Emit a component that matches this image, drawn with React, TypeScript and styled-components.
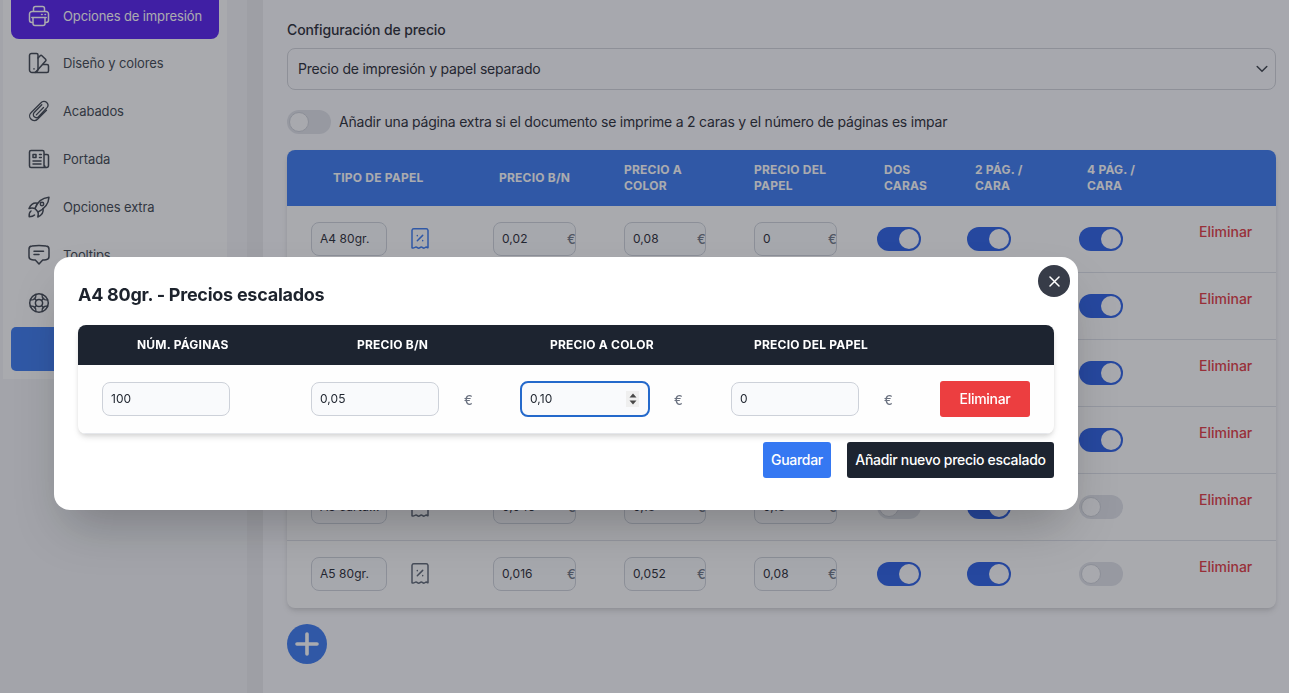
import React from "react";
import styled, { createGlobalStyle } from "styled-components";

const Global = createGlobalStyle`
  *, *::before, *::after { box-sizing: border-box; }
  html, body { margin: 0; height: 100%; overflow: hidden; }
  body {
    font-family: Inter, "Liberation Sans", sans-serif;
    font-size: 14px;
    color: #1d232d;
    background: #f3f4f7;
  }
  button, input { font: inherit; color: inherit; letter-spacing: inherit; }
`;

const Page = styled.div`
  display: flex;
  height: 693px;
  overflow: hidden;
`;
const Rail = styled.div`
  flex: 0 0 247px;
  padding-left: 3px;
`;
const Sidebar = styled.nav`
  width: 224px;
  height: 379px;
  padding: 0 8px;
  background: #fdfdfd;
`;
const NavItem = styled.a<{ $active?: boolean }>`
  display: flex;
  align-items: center;
  gap: 12px;
  height: 48px;
  padding-left: 16px;
  font-size: 13px;
  letter-spacing: -0.12px;
  color: ${(p) => (p.$active ? "#fff" : "#373e49")};
  svg { flex: none; }
`;
const ActiveItem = styled(NavItem)`
  height: 39px;
  padding-bottom: 8px;
  background: #4f16ed;
  border-radius: 0 0 8px 8px;
`;
const SaveBar = styled.div`
  height: 44px;
  background: #3576f0;
  border-radius: 5px;
`;
const Divider = styled.div`
  flex: 0 0 16px;
  background: #ebebee;
`;
const Main = styled.main`
  flex: 1;
  padding: 20px 13px 0 24px;
  background: #fafafd;
`;
const Label = styled.div`
  height: 20px;
  line-height: 20px;
  font-weight: 500;
  letter-spacing: -0.12px;
`;
const Select = styled.div`
  display: flex;
  align-items: center;
  justify-content: space-between;
  height: 42px;
  margin-top: 8px;
  padding: 0 7px 2px 10px;
  border: 1px solid #d1d3d9;
  border-radius: 8px;
  letter-spacing: -0.21px;
  svg { margin-top: 2px; }
`;
const SwitchLine = styled.div`
  display: flex;
  align-items: center;
  gap: 8px;
  height: 24px;
  margin: 20px 0 16px;
`;
const SwitchText = styled.span`
  padding-bottom: 2px;
  letter-spacing: -0.207px;
`;
const Toggle = styled.span<{ $on?: boolean }>`
  display: flex;
  flex: none;
  justify-content: ${(p) => (p.$on ? "flex-end" : "flex-start")};
  width: 44px;
  height: 24px;
  padding: 2px;
  border-radius: 12px;
  background: ${(p) => (p.$on ? "#245ae4" : "#dfe1e8")};
  &::after {
    content: "";
    width: 20px;
    height: 20px;
    border-radius: 50%;
    background: #fcfcfd;
    border: ${(p) => (p.$on ? "0" : "1px solid #cdd0d8")};
  }
`;
const Table = styled.section`
  border-radius: 8px;
  overflow: hidden;
  background: #fefefe;
  box-shadow: 0 4px 6px -1px rgba(0, 0, 0, 0.12), 0 2px 4px -1px rgba(0, 0, 0, 0.08);
`;
const PriceGrid = styled.div`
  display: grid;
  grid-template-columns: 182px 131px 130px 123px 90px 112px 120px 1fr;
  padding-left: 24px;
`;
const PriceHead = styled(PriceGrid)`
  height: 56px;
  align-items: center;
  background: #3576f0;
  color: #fff;
`;
const Th = styled.div<{ $pad?: number }>`
  padding-left: ${(p) => p.$pad ?? 0}px;
  font-size: 12px;
  line-height: 16px;
  font-weight: 700;
  letter-spacing: 0.22px;
  text-transform: uppercase;
  white-space: pre-line;
`;
const PriceRow = styled(PriceGrid)`
  height: 67px;
  padding-top: 16px;
  align-items: start;
  border-bottom: 1px solid #dcdfe7;
  &:last-child { border-bottom-color: transparent; }
  ${Toggle} { margin-top: 5px; }
`;
const NameCell = styled.div`
  display: flex;
  align-items: center;
  gap: 22px;
`;
const Field = styled.div<{ $w: number }>`
  display: flex;
  align-items: center;
  justify-content: space-between;
  width: ${(p) => p.$w}px;
  height: 34px;
  padding: 0 0 2px 8px;
  border: 1px solid #cdd1d9;
  border-radius: 8px;
  background: #f9fafc;
  font-size: 12px;
  letter-spacing: 0.05px;
  overflow: hidden;
  white-space: nowrap;
`;
const Unit = styled.span`
  width: 8px;
  padding-top: 1px;
  color: #6b7280;
  font-size: 13px;
  line-height: 16px;
  font-weight: 500;
`;
const Remove = styled.a`
  color: #e2323b;
  line-height: 20px;
  font-weight: 500;
`;
const AddButton = styled.button`
  display: flex;
  align-items: center;
  justify-content: center;
  width: 40px;
  height: 40px;
  margin-top: 16px;
  padding: 0;
  border: 0;
  border-radius: 50%;
  background: #3576f0;
`;

const Overlay = styled.div`
  position: fixed;
  inset: 0;
  display: flex;
  align-items: flex-start;
  padding: 257px 0 0 54px;
  background: rgba(42, 46, 54, 0.4);
`;
const Dialog = styled.div`
  position: relative;
  width: 1024px;
  height: 253px;
  padding: 24px;
  border-radius: 16px;
  background: #fff;
  box-shadow: 0 25px 50px -12px rgba(0, 0, 0, 0.25);
`;
const Close = styled.button`
  position: absolute;
  top: 8px;
  right: 8px;
  display: flex;
  align-items: center;
  justify-content: center;
  width: 32px;
  height: 32px;
  padding: 0;
  border: 0;
  border-radius: 50%;
  background: #373c48;
`;
const Title = styled.h3`
  margin: 0 0 16px;
  font-size: 18px;
  line-height: 28px;
  font-weight: 700;
  letter-spacing: -0.26px;
`;
const ScaleGrid = styled.div`
  display: grid;
  grid-template-columns: 209px 210px 210px 209px 1fr;
  padding: 0 24px;
`;
const ScaleHead = styled(ScaleGrid)`
  height: 40px;
  align-items: center;
  color: #fff;
  background: #1d2430;
`;
const ScaleRow = styled(ScaleGrid)`
  height: 69px;
  padding-top: 16px;
  border-bottom: 1px solid #e5e7eb;
`;
const ScaleCell = styled.div`
  display: flex;
  align-items: center;
  gap: 25px;
  height: 36px;
`;
const Focused = styled(Field)`
  height: 36px;
  margin: 0 -1px;
  padding-right: 9px;
  border: 2px solid #2469cb;
`;
const Spinner = styled.span`
  display: flex;
  align-items: center;
  justify-content: center;
  width: 13px;
  height: 16px;
  margin-top: 2px;
  background: #efefef;
`;
const Button = styled.button<{ $bg: string; $w: number }>`
  width: ${(p) => p.$w}px;
  height: 36px;
  padding: 0 0 2px;
  border: 0;
  border-radius: 3px;
  background: ${(p) => p.$bg};
  color: #fff;
  font-weight: 500;
  letter-spacing: -0.3px;
  white-space: nowrap;
`;
const Actions = styled.div`
  display: flex;
  justify-content: flex-end;
  gap: 16px;
  margin-top: 8px;
`;

const Icon = ({ children }: { children: React.ReactNode }) => (
  <svg width="24" height="24" viewBox="0 0 24 24" fill="none" stroke="currentColor" strokeWidth="1.5" strokeLinecap="round" strokeLinejoin="round">
    {children}
  </svg>
);

const PrinterIcon = () => (
  <Icon>
    <path d="M6.500 7V4.500a2 2 0 0 1 2-2h7a2 2 0 0 1 2 2V7" />
    <path d="M5.500 18.500H5a2.500 2.500 0 0 1-2.500-2.500v-6A2.500 2.500 0 0 1 5 7.500h14a2.500 2.500 0 0 1 2.500 2.500v6a2.500 2.500 0 0 1-2.500 2.500h-.5" />
    <path d="M4.800 13.500h14.400M6 13.500v6a2 2 0 0 0 2 2h8a2 2 0 0 0 2-2v-6" />
    <path d="M14.500 10.500h.7M18 10.500h.5" />
  </Icon>
);
const SwatchIcon = () => (
  <Icon>
    <path d="M4.500 2.500h5A1.500 1.500 0 0 1 11 4v14a3.500 3.500 0 0 1-3.500 3.500H5A2.500 2.500 0 0 1 2.500 19V4.500a2 2 0 0 1 2-2z" />
    <path d="M11 7l2.200-2.300a1.200 1.200 0 0 1 1.700 0l3.700 3.600a1.200 1.200 0 0 1 0 1.700L8.800 21" />
    <path d="M16 13.500h4a1.500 1.500 0 0 1 1.500 1.500v5a1.500 1.500 0 0 1-1.500 1.500H8M7 17.800v.1" />
  </Icon>
);
const ClipIcon = () => (
  <Icon>
    <path d="M19.500 11.200l-9 9a4.500 4.500 0 0 1-6.600-.2 4.500 4.500 0 0 1 .1-6.300l10-10a3.900 3.900 0 0 1 5.700-.2c1.500 1.500 1.700 3.500.3 5.100l-8.500 9a3 3 0 0 1-4.200.2 3 3 0 0 1-.1-4.300l7.600-7.800" strokeWidth="1.300" />
    <path d="M16.500 8.500l-7.200 7.400" strokeWidth="1.300" />
  </Icon>
);
const NewsIcon = () => (
  <Icon>
    <path d="M4 3.500h11.500A1.500 1.500 0 0 1 17 5v13a2.500 2.500 0 0 0 2.500 2.500H4A1.500 1.500 0 0 1 2.500 19V5A1.500 1.500 0 0 1 4 3.500zM17 7.500h3A1.500 1.500 0 0 1 21.500 9v9.500a2 2 0 0 1-2 2 2 2 0 0 1-2-2" />
    <path d="M6 7.500h3v3H6zM12.500 7.500h1.800M12.500 10.500h1.800M6 14h8M6 17h8" />
  </Icon>
);
const RocketIcon = () => (
  <Icon>
    <path d="M8 13.500C10 7.500 14 3 22 2.200 21.500 10 17 14 11 17z" />
    <circle cx="15" cy="9" r="1.700" />
    <path d="M10.500 8.200C7 7.500 4 9 2 13.500c2-.7 4-.7 6 0M16 13.500c.7 3.500-.8 6.500-5.200 8.500.7-2 .7-3.500.2-5" />
    <path d="M4 16c-1.500 1-2 3.500-1.800 5.700 2 0 4-.3 5.300-1.700" />
  </Icon>
);
const TooltipIcon = () => (
  <Icon>
    <path d="M5 3c4.500-.7 9.500-.7 14 0a3.200 3.200 0 0 1 3 3.200v7.300a3.200 3.200 0 0 1-3 3.200c-1.100.2-2.200.3-3.300.3L12 21l-3.700-4c-1.100 0-2.200-.1-3.300-.3a3.200 3.200 0 0 1-3-3.200V6.200A3.200 3.200 0 0 1 5 3zM7 8.200h9.500M7 11.500h5" />
  </Icon>
);
const LifebuoyIcon = () => (
  <Icon>
    <circle cx="12" cy="12" r="9.300" />
    <circle cx="12" cy="12" r="3.600" />
    <path d="M9.500 9.500L7.400 7.400M14.500 9.500l2.100-2.100M9.500 14.500l-2.100 2.100M14.500 14.500l2.100 2.100" />
    <path d="M9 3.300L8.600 6.500 6.500 8.600 3.300 9M15 3.300l.4 3.200 2.100 2.100 3.200.4M9 20.700l-.4-3.200-2.100-2.100L3.300 15M15 20.700l.4-3.200 2.100-2.100 3.200-.4" strokeWidth="1.300" />
  </Icon>
);
const CouponIcon = ({ color }: { color: string }) => (
  <svg width="22" height="24" viewBox="0 0 22 24" fill="none" stroke={color} strokeWidth="1.500" strokeLinecap="round" strokeLinejoin="round">
    <path d="M3 20.800V3.300a1.800 1.800 0 0 1 1.800-1.500h12.400A1.800 1.800 0 0 1 19 3.300v17.500c-1-.7-2-.9-2.700-.3s-1.700.9-2.700.1-1.700-.8-2.600 0-1.700.8-2.600 0-1.800-.7-2.700-.1-1.700.8-2.700.3z" />
    <path d="M8.300 13.800l5.400-5.400M8.300 8.600v.1M13.700 13.600v.1" />
  </svg>
);

const nav: [string, () => React.JSX.Element][] = [
  ["Diseño y colores", SwatchIcon],
  ["Acabados", ClipIcon],
  ["Portada", NewsIcon],
  ["Opciones extra", RocketIcon],
  ["Tooltips", TooltipIcon],
  ["", LifebuoyIcon],
];

type Paper = { name: string; bn: string; color: string; paper: string; on: boolean[]; scaled?: boolean };
const emptyPaper: Paper = { name: "", bn: "", color: "", paper: "", on: [true, true, true] };
const papers: Paper[] = [
  { name: "A4 80gr.", bn: "0,02", color: "0,08", paper: "0", on: [true, true, true], scaled: true },
  emptyPaper,
  emptyPaper,
  emptyPaper,
  { name: "A3 cartu...", bn: "0,045", color: "0,18", paper: "0,18", on: [false, true, false] },
  { name: "A5 80gr.", bn: "0,016", color: "0,052", paper: "0,08", on: [true, true, false] },
];

const Price = ({ value, width }: { value: string; width: number }) => (
  <Field $w={width}>
    {value}
    {value && <Unit>€</Unit>}
  </Field>
);

export default function App() {
  return (
    <>
      <Global />
      <Page>
        <Rail>
          <Sidebar>
            <ActiveItem $active>
              <PrinterIcon />
              Opciones de impresión
            </ActiveItem>
            {nav.map(([label, Glyph], i) => (
              <NavItem key={i}>
                <Glyph />
                {label}
              </NavItem>
            ))}
            <SaveBar />
          </Sidebar>
        </Rail>
        <Divider />
        <Main>
          <Label>Configuración de precio</Label>
          <Select>
            Precio de impresión y papel separado
            <svg width="12" height="8" viewBox="0 0 12 8" fill="none" stroke="#343a43" strokeWidth="1.500" strokeLinecap="round">
              <path d="M1.200 1.500L6 6.200l4.800-4.700" />
            </svg>
          </Select>
          <SwitchLine>
            <Toggle />
            <SwitchText>
              Añadir una página extra si el documento se imprime a 2 caras y el número de páginas es impar
            </SwitchText>
          </SwitchLine>
          <Table>
            <PriceHead>
              <Th $pad={22}>Tipo de papel</Th>
              <Th $pad={6}>Precio B/N</Th>
              <Th>{"Precio a\ncolor"}</Th>
              <Th>{"Precio del\npapel"}</Th>
              <Th $pad={7}>{"Dos\ncaras"}</Th>
              <Th $pad={8}>{"2 pág. /\ncara"}</Th>
              <Th $pad={8}>{"4 pág. /\ncara"}</Th>
            </PriceHead>
            {papers.map((p, row) => (
              <PriceRow key={row}>
                <NameCell>
                  <Field $w={76}>{p.name}</Field>
                  <CouponIcon color={p.scaled ? "#3576f0" : "#596270"} />
                </NameCell>
                <Price value={p.bn} width={83} />
                <Price value={p.color} width={82} />
                <Price value={p.paper} width={83} />
                {p.on.map((on, i) => (
                  <Toggle key={i} $on={on} />
                ))}
                <Remove>Eliminar</Remove>
              </PriceRow>
            ))}
          </Table>
          <AddButton>
            <svg width="24" height="24" viewBox="0 0 24 24" stroke="#fff" strokeWidth="3.600" strokeLinecap="round">
              <path d="M12 2v20M2 12h20" />
            </svg>
          </AddButton>
        </Main>
      </Page>
      <Overlay>
        <Dialog>
          <Close>
            <svg width="11" height="11" viewBox="0 0 11 11" stroke="#fff" strokeWidth="1.500" strokeLinecap="round">
              <path d="M1 1l9 9M10 1l-9 9" />
            </svg>
          </Close>
          <Title>A4 80gr. - Precios escalados</Title>
          <Table>
            <ScaleHead>
              <Th $pad={35}>Núm. páginas</Th>
              <Th $pad={46}>Precio B/N</Th>
              <Th $pad={29}>Precio a color</Th>
              <Th $pad={23}>Precio del papel</Th>
            </ScaleHead>
            <ScaleRow>
              <ScaleCell>
                <Field $w={128}>100</Field>
              </ScaleCell>
              <ScaleCell>
                <Field $w={128}>0,05</Field>
                <Unit>€</Unit>
              </ScaleCell>
              <ScaleCell>
                <Focused $w={130}>
                  0,10
                  <Spinner>
                    <svg width="8" height="12" viewBox="0 0 8 12" fill="#484848">
                      <path d="M4 .5L7.500 4.500h-7zM4 11.500L.5 7.500h7z" />
                    </svg>
                  </Spinner>
                </Focused>
                <Unit>€</Unit>
              </ScaleCell>
              <ScaleCell>
                <Field $w={128}>0</Field>
                <Unit>€</Unit>
              </ScaleCell>
              <Button $bg="#ec3e40" $w={90}>Eliminar</Button>
            </ScaleRow>
          </Table>
          <Actions>
            <Button $bg="#3578f2" $w={68}>Guardar</Button>
            <Button $bg="#1d2430" $w={207}>Añadir nuevo precio escalado</Button>
          </Actions>
        </Dialog>
      </Overlay>
    </>
  );
}
